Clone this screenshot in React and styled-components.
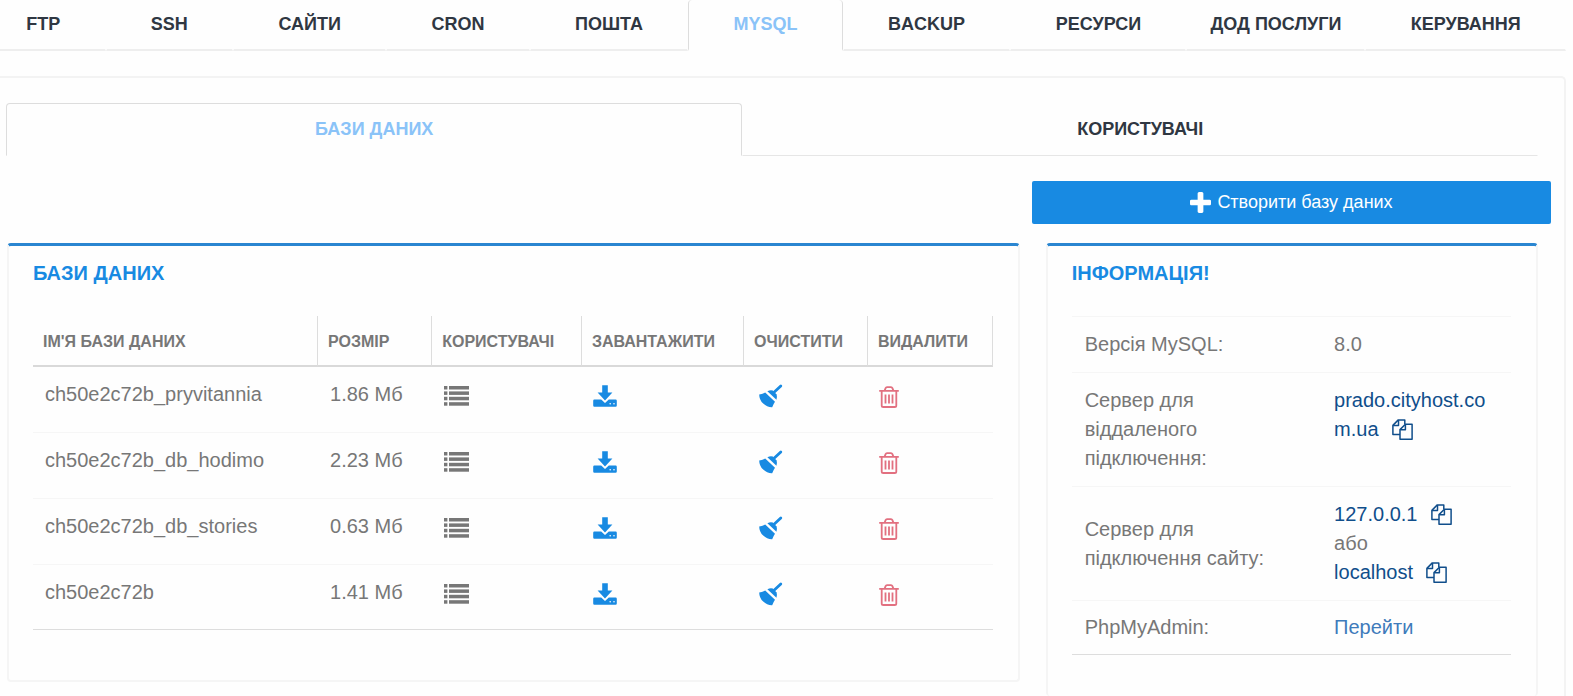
import styled, { createGlobalStyle } from "styled-components";

const GlobalStyle = createGlobalStyle`
  *, *::before, *::after {
    box-sizing: border-box;
  }

  body {
    margin: 0;
    background: #fefefe;
    color: #777;
    font-family: "Liberation Sans", Arial, sans-serif;
    font-size: 20px;
    line-height: 29px;
  }

  a {
    text-decoration: none;
  }

  button {
    font-family: inherit;
    cursor: pointer;
  }
`;

const Page = styled.div`
  display: flex;
  flex-direction: column;
  min-height: 100vh;
  padding-right: 7px;
  overflow: hidden;
`;

const TopNav = styled.nav`
  display: flex;
  margin-left: -19px;
`;

const TopTab = styled.a`
  flex: ${(props) => (props.$compact ? 1 : 4)} 1 auto;
  height: 51px;
  padding: 10px 16px 8px;
  border: solid ${(props) => (props.$active ? "#ddd" : "transparent")};
  border-width: 0 1px;
  border-bottom: 2px solid ${(props) => (props.$active ? "transparent" : "#eee")};
  border-radius: 4px 4px 0 0;
  color: ${(props) => (props.$active ? "#8ac3f8" : "#2f3742")};
  font-size: 18px;
  font-weight: 700;
  text-align: center;
  text-transform: uppercase;
  white-space: nowrap;
`;

const Panel = styled.main`
  flex: 1;
  display: flex;
  flex-direction: column;
  margin-top: 25px;
  border: solid #f3f3f3;
  border-width: 2px 2px 0 0;
  border-radius: 0 5px 0 0;
`;

const SubNav = styled.nav`
  display: grid;
  grid-template-columns: 736fr 795fr;
  padding: 25px 26px 0 6px;
`;

const SubTab = styled.a`
  height: 53px;
  padding: 11px;
  border: 1px solid transparent;
  border-color: ${(props) =>
    props.$active ? "#ddd #ddd transparent" : "transparent transparent #e6e6e6"};
  border-radius: 4px 4px 0 0;
  color: ${(props) => (props.$active ? "#8ac3f8" : "#2f3742")};
  font-size: 18px;
  font-weight: 700;
  text-align: center;
  text-transform: uppercase;
`;

const Toolbar = styled.div`
  display: grid;
  grid-template-columns: 1032fr 519fr;
  padding: 25px 13px 19px 0;
`;

const CreateButton = styled.button`
  grid-column: 2;
  display: flex;
  align-items: center;
  justify-content: center;
  gap: 6px;
  height: 43px;
  border: 0;
  border-radius: 2px;
  background: #188ae2;
  color: #fff;
  font-size: 18px;
`;

const Columns = styled.div`
  flex: 1;
  display: grid;
  grid-template-columns: 1012fr 492fr;
  gap: 26px;
  padding: 0 26px 0 7px;
`;

const Card = styled.section`
  align-self: ${(props) => (props.$stretch ? "stretch" : "start")};
  padding: 13px 25px ${(props) => (props.$stretch ? "0" : "50px")} 24px;
  border: 2px solid #f5f5f5;
  border-top: 3px solid #2a86d1;
  border-bottom-width: ${(props) => (props.$stretch ? "0" : "2px")};
  border-radius: 4px;
`;

const CardTitle = styled.h2`
  margin: 0 0 28px;
  color: #188ae2;
  font-size: 20px;
  font-weight: 700;
  line-height: 29px;
  text-transform: uppercase;
`;

const Table = styled.table`
  width: 100%;
  table-layout: fixed;
  border-collapse: separate;
  border-spacing: 0;
  border-bottom: 1px solid #ddd;
`;

const HeadCell = styled.th`
  width: ${(props) => props.$width};
  height: 51px;
  padding: 2px 10px 0;
  border-right: 1px solid #ddd;
  border-bottom: 2px solid #d9d9d9;
  font-size: 16px;
  text-align: left;
  text-transform: uppercase;
  white-space: nowrap;
`;

const Cell = styled.td`
  height: 66px;
  padding: 13px 12px 0;
  border-bottom: 1px solid #f6f6f6;
  vertical-align: top;

  tr:last-child > & {
    height: 64px;
    border-bottom: 0;
  }
`;

const IconCell = styled(Cell)`
  padding: 12px 11px 0;
`;

const IconButton = styled.button`
  display: flex;
  align-items: center;
  height: 34px;
  padding: 0;
  border: 0;
  background: none;
  color: ${(props) => props.$color};
`;

const InfoLabel = styled.th`
  width: 57%;
  padding: 13px 13px 13px;
  border-top: 1px solid #f6f6f6;
  font-weight: 400;
  text-align: left;
  vertical-align: middle;

  tr:last-child > & {
    padding: 12px 13px;
  }
`;

const InfoValue = styled.td`
  padding: 13px 12px 13px;
  border-top: 1px solid #f6f6f6;
  vertical-align: top;
  word-break: break-all;

  tr:last-child > & {
    padding: 12px;
  }
`;

const ValueLink = styled.a`
  color: ${(props) => (props.$light ? "#3f7bbb" : "#104e8b")};
`;

const CopyButton = styled.button`
  height: 24px;
  margin-left: 13px;
  padding: 0 0 3px;
  border: 0;
  background: none;
  color: #104e8b;
  vertical-align: middle;

  svg {
    display: block;
  }
`;

function PlusIcon() {
  return (
    <svg width="21" height="21" viewBox="192 128 1408 1408" fill="currentColor">
      <path d="M1600 736v192q0 40-28 68t-68 28h-416v416q0 40-28 68t-68 28h-192q-40 0-68-28t-28-68v-416h-416q-40 0-68-28t-28-68v-192q0-40 28-68t68-28h416v-416q0-40 28-68t68-28h192q40 0 68 28t28 68v416h416q40 0 68 28t28 68z" />
    </svg>
  );
}

function ListIcon() {
  return (
    <svg width="26" height="20" viewBox="0 0 26 20" fill="currentColor">
      {[0, 5.4, 10.8, 16.2].map((y) => (
        <g key={y}>
          <rect x="1" y={y} width="3.4" height="3.5" />
          <rect x="6" y={y} width="20" height="3.5" />
        </g>
      ))}
    </svg>
  );
}

function DownloadIcon() {
  return (
    <svg width="24" height="22" viewBox="0 0 24 22" fill="currentColor">
      <path d="M9.2 0.2h5.6v7.4h4.6L12 15.4 4.6 7.6h4.6z" />
      <path
        fillRule="evenodd"
        d="M1.4 14.5h6.8L12 18l3.8-3.5h6.8a1.2 1.2 0 0 1 1.2 1.2v4.9a1.2 1.2 0 0 1-1.2 1.2H1.4a1.2 1.2 0 0 1-1.2-1.2v-4.9a1.2 1.2 0 0 1 1.2-1.2zM17.2 17.9a0.8 0.8 0 1 0 0 1.6 0.8 0.8 0 0 0 0-1.6zM21 17.9a0.8 0.8 0 1 0 0 1.6 0.8 0.8 0 0 0 0-1.6z"
      />
    </svg>
  );
}

function BroomIcon() {
  return (
    <svg width="28" height="24" viewBox="-4 0 28 24" fill="currentColor">
      <path
        d="M21.8 2l-7 6.6"
        stroke="currentColor"
        strokeWidth="2.8"
        strokeLinecap="round"
      />
      <path d="M8.4 7.2q3-1.4 5.4-0.6l3.8 3.8q0.8 2.6-0.2 5.4z" />
      <path d="M0.2 10.4q3.2-0.2 6-1.8l9.8 9.2q-1.6 2.4-2.8 5.4-5 0.2-9-3.6T0.2 10.4z" />
    </svg>
  );
}

function TrashIcon() {
  return (
    <svg
      width="20"
      height="24"
      viewBox="0 -2 20 24"
      fill="none"
      stroke="currentColor"
      strokeWidth="1.8"
    >
      <path d="M0.2 4.9h19.6M5.6 4.6l1-2.5q0.4-1 1.4-1h4q1 0 1.4 1l1 2.5" />
      <path d="M2.7 5v14.4q0 1.6 1.6 1.6h11.4q1.6 0 1.6-1.6V5" />
      <path d="M6.5 8.6v8.8M10 8.6v8.8M13.5 8.6v8.8" />
    </svg>
  );
}

function CopyIcon() {
  return (
    <svg
      width="21"
      height="21"
      viewBox="0 0 21 21"
      fill="none"
      stroke="currentColor"
      strokeWidth="1.5"
      strokeLinejoin="round"
    >
      <path d="M8 15.6H0.9V6.4L6.3 0.9h6.5v4.2" />
      <path d="M6.5 1v5.5H1" />
      <path d="M8 10.6l5.4-5.4h6.7v15H8z" />
      <path d="M13.4 5.3v5.4H8.2" />
    </svg>
  );
}

const topTabs = [
  "FTP",
  "SSH",
  "Сайти",
  "Cron",
  "Пошта",
  "MySQL",
  "Backup",
  "Ресурси",
  "Дод послуги",
  "Керування",
];

const columns = [
  { title: "Ім'я бази даних", width: "29.7%" },
  { title: "Розмір", width: "11.9%" },
  { title: "Користувачі", width: "15.6%" },
  { title: "Завантажити", width: "16.9%" },
  { title: "Очистити", width: "12.9%" },
  { title: "Видалити", width: "13%" },
];

const databases = [
  { name: "ch50e2c72b_pryvitannia", size: "1.86 Мб" },
  { name: "ch50e2c72b_db_hodimo", size: "2.23 Мб" },
  { name: "ch50e2c72b_db_stories", size: "0.63 Мб" },
  { name: "ch50e2c72b", size: "1.41 Мб" },
];

function DatabaseRow({ database }) {
  const { name, size } = database;
  return (
    <tr>
      <Cell>{name}</Cell>
      <Cell>{size}</Cell>
      <IconCell>
        <IconButton $color="#777" aria-label="Користувачі">
          <ListIcon />
        </IconButton>
      </IconCell>
      <IconCell>
        <IconButton $color="#188ae2" aria-label="Завантажити">
          <DownloadIcon />
        </IconButton>
      </IconCell>
      <IconCell>
        <IconButton $color="#188ae2" aria-label="Очистити">
          <BroomIcon />
        </IconButton>
      </IconCell>
      <IconCell>
        <IconButton $color="#e27080" aria-label="Видалити">
          <TrashIcon />
        </IconButton>
      </IconCell>
    </tr>
  );
}

function CopyValue({ children }) {
  return (
    <>
      <ValueLink href="#copy">{children}</ValueLink>
      <CopyButton aria-label="Копіювати">
        <CopyIcon />
      </CopyButton>
    </>
  );
}

export default function App() {
  return (
    <>
      <GlobalStyle />
      <Page>
        <TopNav>
          {topTabs.map((tab) => (
            <TopTab
              key={tab}
              href="#tab"
              $active={tab === "MySQL"}
              $compact={tab.includes(" ")}
            >
              {tab}
            </TopTab>
          ))}
        </TopNav>
        <Panel>
          <SubNav>
            <SubTab href="#databases" $active>
              Бази даних
            </SubTab>
            <SubTab href="#users">Користувачі</SubTab>
          </SubNav>
          <Toolbar>
            <CreateButton>
              <PlusIcon />
              Створити базу даних
            </CreateButton>
          </Toolbar>
          <Columns>
            <Card>
              <CardTitle>Бази даних</CardTitle>
              <Table>
                <thead>
                  <tr>
                    {columns.map((column) => (
                      <HeadCell key={column.title} $width={column.width}>
                        {column.title}
                      </HeadCell>
                    ))}
                  </tr>
                </thead>
                <tbody>
                  {databases.map((database) => (
                    <DatabaseRow key={database.name} database={database} />
                  ))}
                </tbody>
              </Table>
            </Card>
            <Card $stretch>
              <CardTitle>Інформація!</CardTitle>
              <Table>
                <tbody>
                  <tr>
                    <InfoLabel>Версія MySQL:</InfoLabel>
                    <InfoValue>8.0</InfoValue>
                  </tr>
                  <tr>
                    <InfoLabel>Сервер для віддаленого підключення:</InfoLabel>
                    <InfoValue>
                      <CopyValue>prado.cityhost.com.ua</CopyValue>
                    </InfoValue>
                  </tr>
                  <tr>
                    <InfoLabel>Сервер для підключення сайту:</InfoLabel>
                    <InfoValue>
                      <CopyValue>127.0.0.1</CopyValue>
                      <br />
                      або
                      <br />
                      <CopyValue>localhost</CopyValue>
                    </InfoValue>
                  </tr>
                  <tr>
                    <InfoLabel>PhpMyAdmin:</InfoLabel>
                    <InfoValue>
                      <ValueLink href="#phpmyadmin" $light>
                        Перейти
                      </ValueLink>
                    </InfoValue>
                  </tr>
                </tbody>
              </Table>
            </Card>
          </Columns>
        </Panel>
      </Page>
    </>
  );
}
